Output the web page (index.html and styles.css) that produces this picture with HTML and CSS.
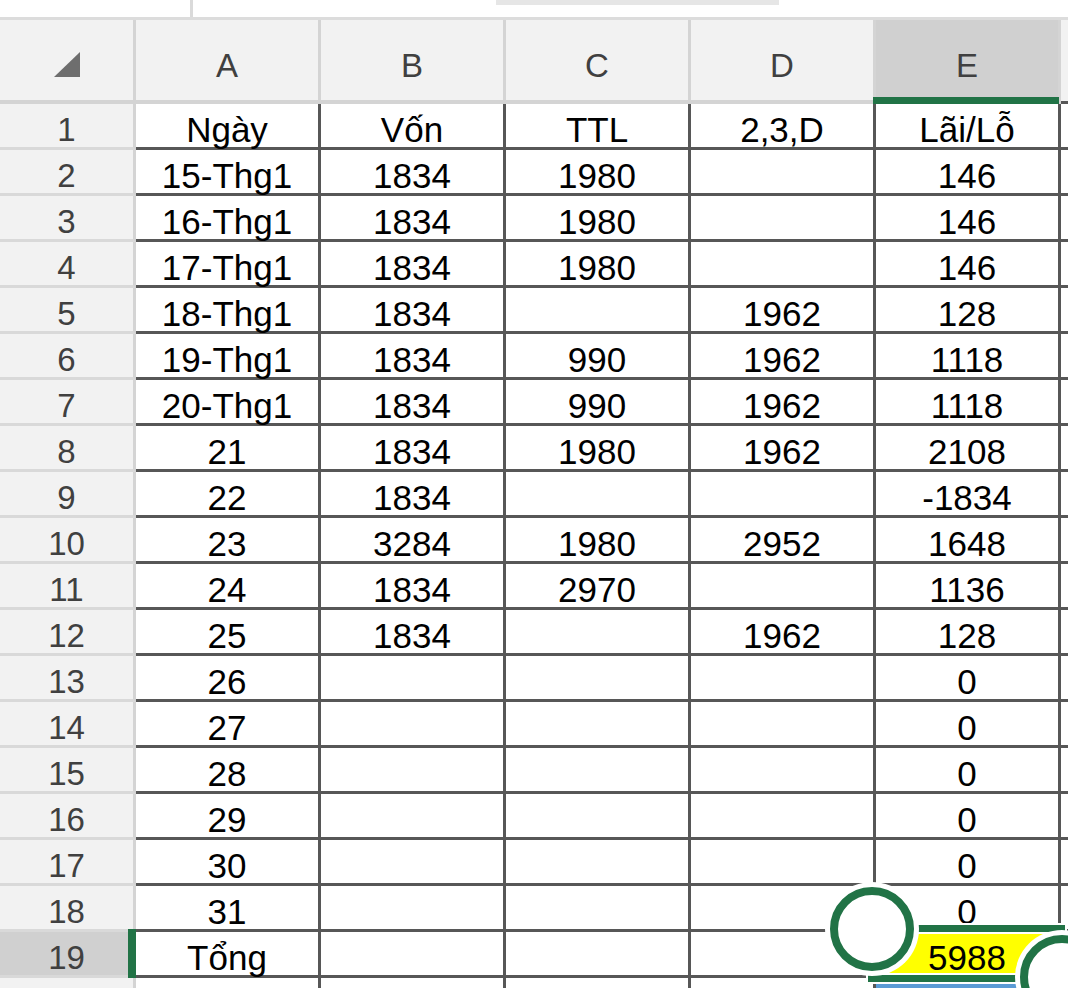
FILE: index.html
```html
<!DOCTYPE html>
<html lang="vi">
<head>
<meta charset="utf-8">
<title>Sheet</title>
<link rel="stylesheet" href="styles.css">
</head>
<body>
<div class="top">
  <div class="tabline"></div>
  <div class="topbar"></div>
</div>
<div class="sheet">
  <div class="corner"><svg width="26" height="25" viewBox="0 0 26 25"><polygon points="26,0 26,25 0,25" fill="#6e6e6e"/></svg></div>
  <div class="ch">A</div><div class="ch">B</div><div class="ch">C</div><div class="ch">D</div><div class="ch sel">E</div><div class="ch f"></div>

  <div class="rh">1</div><div class="c">Ngày</div><div class="c">Vốn</div><div class="c">TTL</div><div class="c">2,3,D</div><div class="c">Lãi/Lỗ</div><div class="f"></div>
  <div class="rh">2</div><div class="c">15-Thg1</div><div class="c">1834</div><div class="c">1980</div><div class="c"></div><div class="c">146</div><div class="f"></div>
  <div class="rh">3</div><div class="c">16-Thg1</div><div class="c">1834</div><div class="c">1980</div><div class="c"></div><div class="c">146</div><div class="f"></div>
  <div class="rh">4</div><div class="c">17-Thg1</div><div class="c">1834</div><div class="c">1980</div><div class="c"></div><div class="c">146</div><div class="f"></div>
  <div class="rh">5</div><div class="c">18-Thg1</div><div class="c">1834</div><div class="c"></div><div class="c">1962</div><div class="c">128</div><div class="f"></div>
  <div class="rh">6</div><div class="c">19-Thg1</div><div class="c">1834</div><div class="c">990</div><div class="c">1962</div><div class="c">1118</div><div class="f"></div>
  <div class="rh">7</div><div class="c">20-Thg1</div><div class="c">1834</div><div class="c">990</div><div class="c">1962</div><div class="c">1118</div><div class="f"></div>
  <div class="rh">8</div><div class="c">21</div><div class="c">1834</div><div class="c">1980</div><div class="c">1962</div><div class="c">2108</div><div class="f"></div>
  <div class="rh">9</div><div class="c">22</div><div class="c">1834</div><div class="c"></div><div class="c"></div><div class="c">-1834</div><div class="f"></div>
  <div class="rh">10</div><div class="c">23</div><div class="c">3284</div><div class="c">1980</div><div class="c">2952</div><div class="c">1648</div><div class="f"></div>
  <div class="rh">11</div><div class="c">24</div><div class="c">1834</div><div class="c">2970</div><div class="c"></div><div class="c">1136</div><div class="f"></div>
  <div class="rh">12</div><div class="c">25</div><div class="c">1834</div><div class="c"></div><div class="c">1962</div><div class="c">128</div><div class="f"></div>
  <div class="rh">13</div><div class="c">26</div><div class="c"></div><div class="c"></div><div class="c"></div><div class="c">0</div><div class="f"></div>
  <div class="rh">14</div><div class="c">27</div><div class="c"></div><div class="c"></div><div class="c"></div><div class="c">0</div><div class="f"></div>
  <div class="rh">15</div><div class="c">28</div><div class="c"></div><div class="c"></div><div class="c"></div><div class="c">0</div><div class="f"></div>
  <div class="rh">16</div><div class="c">29</div><div class="c"></div><div class="c"></div><div class="c"></div><div class="c">0</div><div class="f"></div>
  <div class="rh">17</div><div class="c">30</div><div class="c"></div><div class="c"></div><div class="c"></div><div class="c">0</div><div class="f"></div>
  <div class="rh">18</div><div class="c">31</div><div class="c"></div><div class="c"></div><div class="c"></div><div class="c">0</div><div class="f"></div>
  <div class="rh sel">19</div><div class="c">Tổng</div><div class="c"></div><div class="c"></div><div class="c"></div><div class="c yel">5988</div><div class="f"></div>
  <div class="rh"></div><div class="c"></div><div class="c"></div><div class="c"></div><div class="c"></div><div class="c blue"></div><div class="f"></div>

  <div class="selbox"></div>
  <div class="handle h1"></div>
  <div class="handle h2"></div>
</div>
</body>
</html>
```

FILE: styles.css
```css
* {
  box-sizing: border-box;
  margin: 0;
  padding: 0;
}

body {
  width: 1068px;
  height: 988px;
  overflow: hidden;
  background: #ffffff;
  font-family: "Liberation Sans", Arial, sans-serif;
}

.top {
  height: 20px;
  border-bottom: 3px solid #dcdcdc;
  display: flex;
  align-items: flex-start;
}

.tabline {
  margin-left: 190px;
  width: 3px;
  height: 17px;
  background: #dadada;
}

.topbar {
  margin-left: 303px;
  width: 283px;
  height: 5px;
  background: #e6e6e6;
}

.sheet {
  position: relative;
  display: grid;
  grid-template-columns: 136px repeat(5, 185px) 1fr;
  grid-template-rows: 84px;
  grid-auto-rows: 46px;
}

.corner {
  background: #f2f2f2;
  border-right: 3px solid #d4d4d4;
  border-bottom: 4px solid #d4d4d4;
  display: flex;
  justify-content: center;
  padding-top: 32px;
}

.ch {
  background: #f2f2f2;
  border-right: 3px solid #d4d4d4;
  border-bottom: 4px solid #d4d4d4;
  text-align: center;
  font-size: 33px;
  color: #404040;
  padding-top: 11px;
  line-height: 69px;
}

.ch.f {
  border-right: none;
}

.ch.sel {
  position: relative;
  background: #d0d0d0;
}

.ch.sel::after {
  content: "";
  position: absolute;
  left: -3px;
  right: -1px;
  bottom: -4px;
  height: 7px;
  background: #217346;
}

.rh {
  background: #f2f2f2;
  border-right: 3px solid #d4d4d4;
  border-bottom: 3px solid #d9d9d9;
  text-align: center;
  font-size: 33px;
  color: #404040;
  padding-top: 9px;
  line-height: 34px;
}

.rh.sel {
  position: relative;
  background: #d0d0d0;
}

.rh.sel::after {
  content: "";
  position: absolute;
  right: -3px;
  top: -3px;
  bottom: -3px;
  width: 8px;
  background: #217346;
}

.c {
  border-right: 3px solid #575757;
  border-bottom: 3px solid #575757;
  text-align: center;
  font-size: 35px;
  color: #000000;
  padding-top: 8px;
  line-height: 35px;
  white-space: nowrap;
}

.f {
  border-bottom: 3px solid #575757;
}

.yel {
  background: #ffff00;
}

.blue {
  background: #5b9bd5;
}

.selbox {
  position: absolute;
  left: 868px;
  top: 905px;
  width: 197px;
  height: 57px;
  border: 7px solid #217346;
  box-shadow: 0 0 0 2px #ffffff, inset 0 0 0 2px #ffffff;
}

.handle {
  position: absolute;
  width: 84px;
  height: 84px;
  border-radius: 50%;
  border: 8px solid #217346;
  background: #ffffff;
  box-shadow: 0 0 0 5px #ffffff;
}

.h1 {
  left: 830px;
  top: 867px;
}

.h2 {
  left: 1020px;
  top: 915px;
}
```
